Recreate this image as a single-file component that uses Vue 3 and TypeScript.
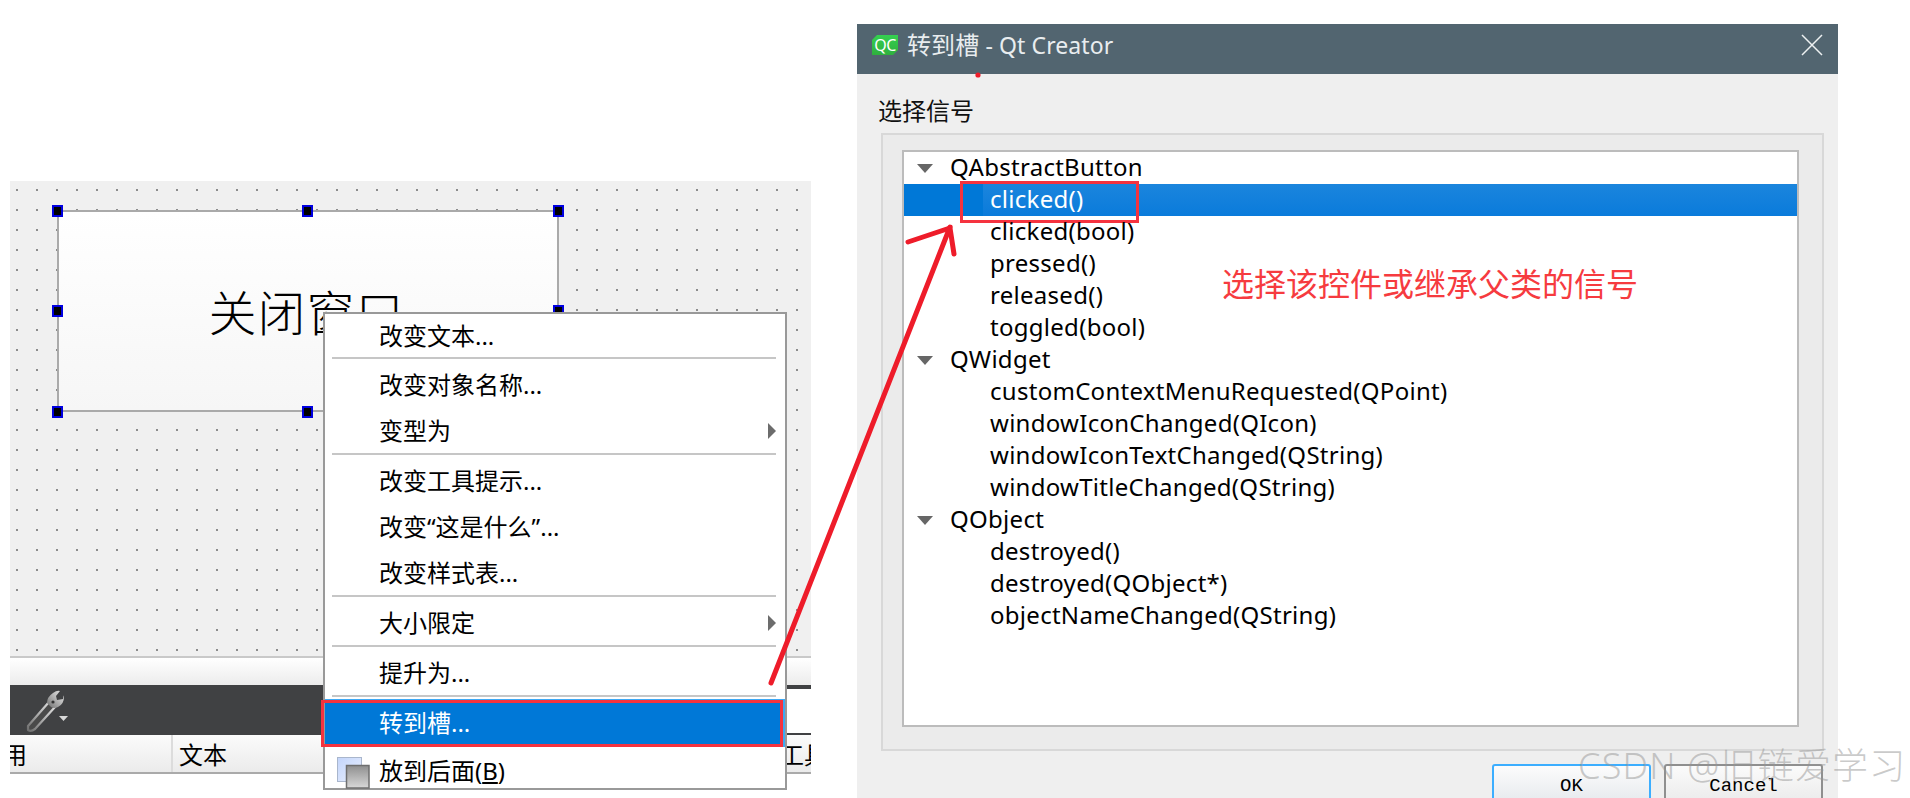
<script setup lang="ts">
interface MenuEntry {
  kind: 'item' | 'sep'
  text?: string
  sub?: boolean
}
interface Signal {
  name: string
  selected?: boolean
}
interface SignalGroup {
  name: string
  signals: Signal[]
}

const topMenu: MenuEntry[] = [
  { kind: 'sep' },
  { kind: 'item', text: '改变对象名称...' },
  { kind: 'item', text: '变型为', sub: true },
  { kind: 'sep' },
  { kind: 'item', text: '改变工具提示...' },
  { kind: 'item', text: '改变“这是什么”...' },
  { kind: 'item', text: '改变样式表...' },
  { kind: 'sep' },
  { kind: 'item', text: '大小限定', sub: true },
  { kind: 'sep' },
  { kind: 'item', text: '提升为...' },
  { kind: 'sep' },
]

const groups: SignalGroup[] = [
  {
    name: 'QAbstractButton',
    signals: [
      { name: 'clicked()', selected: true },
      { name: 'clicked(bool)' },
      { name: 'pressed()' },
      { name: 'released()' },
      { name: 'toggled(bool)' },
    ],
  },
  {
    name: 'QWidget',
    signals: [
      { name: 'customContextMenuRequested(QPoint)' },
      { name: 'windowIconChanged(QIcon)' },
      { name: 'windowIconTextChanged(QString)' },
      { name: 'windowTitleChanged(QString)' },
    ],
  },
  {
    name: 'QObject',
    signals: [
      { name: 'destroyed()' },
      { name: 'destroyed(QObject*)' },
      { name: 'objectNameChanged(QString)' },
    ],
  },
]

const handles = [
  { x: -7, y: -7 },
  { x: 243, y: -7 },
  { x: 494, y: -7 },
  { x: -7, y: 93 },
  { x: 494, y: 93 },
  { x: -7, y: 194 },
  { x: 243, y: 194 },
]
</script>

<template>
  <div class="page">
    <section class="designer-side">
      <div class="form">
        <div class="widget">
          <span class="widget-text">关闭窗口</span>
          <i
            v-for="(h, i) in handles"
            :key="i"
            class="handle"
            :style="{ left: h.x + 'px', top: h.y + 'px' }"
          ></i>
        </div>
      </div>
      <div class="strip"></div>
      <div class="toolbar">
        <div class="tool-main">
          <svg class="wrench" width="44" height="44" viewBox="0 0 44 44">
            <defs>
              <linearGradient id="wr" x1="0" y1="1" x2="1" y2="0">
                <stop offset="0" stop-color="#6e6e6e" />
                <stop offset="0.6" stop-color="#bdbdbd" />
                <stop offset="1" stop-color="#e4e4e4" />
              </linearGradient>
            </defs>
            <path
              d="M3 37 L24 13 L30 18 L10 40 Q6 43 3 41 Z"
              fill="#4a4a4a"
              stroke="url(#wr)"
              stroke-width="2.2"
              stroke-linejoin="round"
            />
            <path
              d="M22 14 Q22 8 28 4 Q32 1 35 2 L31 7 L32 11 L38 10 Q39 4 39 8 Q39 15 33 18 Q29 20 26 18 Z"
              fill="url(#wr)"
            />
            <circle cx="28" cy="13" r="1.6" fill="#333" />
            <path d="M34 27 H43 L38.5 32 Z" fill="#d8d8d8" />
          </svg>
        </div>
        <div class="tool-rest"></div>
      </div>
      <div class="columns">
        <div class="col col-first"><span class="clip-text">用</span></div>
        <div class="col col-text">文本</div>
        <div class="col col-tail">工具</div>
      </div>

      <div class="menu">
        <div class="item first">改变文本...</div>
        <template v-for="(m, i) in topMenu" :key="i">
          <div v-if="m.kind === 'sep'" class="sep"></div>
          <div v-else class="item">
            <span>{{ m.text }}</span>
            <i v-if="m.sub" class="sub"></i>
          </div>
        </template>
        <div class="item active">
          <span>转到槽...</span>
          <i class="active-box"></i>
        </div>
        <div class="item last">
          <svg class="back-icon" width="33" height="32" viewBox="0 0 33 32">
            <defs>
              <linearGradient id="bk" x1="0" y1="0" x2="1" y2="1">
                <stop offset="0" stop-color="#c3d5fb" />
                <stop offset="1" stop-color="#eaf0fe" />
              </linearGradient>
              <linearGradient id="fr" x1="0" y1="0" x2="0" y2="1">
                <stop offset="0" stop-color="#8f8f8f" />
                <stop offset="1" stop-color="#d8d8d8" />
              </linearGradient>
            </defs>
            <rect x="0.5" y="0.5" width="24" height="24" fill="url(#bk)" stroke="#a9b6cc" />
            <rect x="9.5" y="8.5" width="22.5" height="22.5" fill="url(#fr)" stroke="#6f6f6f" stroke-width="1.5" />
          </svg>
          <span>放到后面(<u>B</u>)</span>
        </div>
      </div>
    </section>

    <section class="dialog">
      <header class="titlebar">
        <div class="qc">QC</div>
        <div class="title"><span class="title-cn">转到槽</span> - Qt Creator</div>
        <svg class="close" width="22" height="22" viewBox="0 0 22 22">
          <path d="M1 1 L21 21 M21 1 L1 21" stroke="#eef1f2" stroke-width="1.5" fill="none" />
        </svg>
      </header>
      <div class="label">选择信号</div>
      <div class="group">
        <div class="tree">
          <template v-for="g in groups" :key="g.name">
            <div class="row parent"><i class="twisty"></i>{{ g.name }}</div>
            <div
              v-for="s in g.signals"
              :key="s.name"
              class="row child"
              :class="{ selected: s.selected }"
            >
              <span class="sig">{{ s.name }}</span>
              <i v-if="s.selected" class="sel-box"></i>
            </div>
          </template>
          <div class="note">选择该控件或继承父类的信号</div>
        </div>
      </div>
      <div class="buttons">
        <div class="btn ok">OK</div>
        <div class="btn">Cancel</div>
      </div>
    </section>

    <svg class="ink" width="1910" height="798" viewBox="0 0 1910 798">
      <g stroke="#ee1c2a" stroke-width="5" stroke-linecap="round" fill="none">
        <path d="M771 683 L950 227" />
        <path d="M908 242 L950 228 L954 254" />
      </g>
      <circle cx="978" cy="75" r="2.6" fill="#ee1c2a" />
    </svg>
    <div class="watermark">CSDN @旧链爱学习</div>
  </div>
</template>

<style>
html,
body {
  margin: 0;
  background: #fff;
}
</style>

<style scoped>
.page {
  position: relative;
  display: flex;
  align-items: flex-start;
  width: 1910px;
  height: 798px;
  overflow: hidden;
  background: #fff;
  font-family: "Noto Sans", "Noto Sans CJK SC", sans-serif;
  color: #000;
}

/* left: form editor */
.designer-side {
  position: relative;
  width: 801px;
  margin: 181px 0 0 10px;
  flex: none;
}
.form {
  height: 477px;
  padding: 29px 0 0 47px;
  box-sizing: border-box;
  background-color: #f0f0f0;
  background-image: radial-gradient(circle at 1px 1px, #8c8c8c 0.9px, transparent 1px);
  background-size: 20px 20px;
  background-position: 6px 8px;
  border-bottom: 2px solid #c9c9c9;
  overflow: hidden;
}
.widget {
  position: relative;
  width: 502px;
  height: 202px;
  box-sizing: border-box;
  border: 2px solid #aaa;
  background: linear-gradient(#fff, #f6f6f6);
  display: flex;
  align-items: center;
  justify-content: center;
  font-family: "Noto Sans CJK SC", sans-serif;
  font-size: 48px;
  font-weight: 300;
}
.widget-text {
  letter-spacing: 1px;
  margin: 0 3px 2px 0;
}
.handle {
  position: absolute;
  width: 11px;
  height: 12px;
  box-sizing: border-box;
  background: #000;
  border: 2px solid #0000e0;
}
.strip {
  height: 27px;
  background: linear-gradient(#fff, #ececec);
}
.toolbar {
  display: flex;
  height: 50px;
}
.tool-main {
  flex: 1;
  background: #404143;
  position: relative;
}
.wrench {
  position: absolute;
  left: 15px;
  top: 4px;
}
.tool-rest {
  width: 24px;
  box-sizing: border-box;
  background: #fff;
  border-top: 4px solid #404143;
  border-bottom: 2px solid #404143;
}
.columns {
  display: flex;
  height: 39px;
  box-sizing: border-box;
  border-bottom: 2px solid #aaa;
  background: linear-gradient(#fbfbfb, #ebebeb);
  font-family: "Noto Sans CJK SC", sans-serif;
  font-size: 24px;
  line-height: 37px;
  overflow: hidden;
}
.col {
  box-sizing: border-box;
  white-space: nowrap;
  overflow: hidden;
}
.col-first {
  width: 163px;
  border-right: 2px solid #dcdcdc;
}
.clip-text {
  display: block;
  margin-left: -7px;
}
.col-text {
  width: 607px;
  padding-left: 6px;
}
.col-tail {
  width: 31px;
}

/* context menu */
.menu {
  position: absolute;
  left: 313px;
  top: 131px;
  width: 464px;
  height: 478px;
  box-sizing: border-box;
  background: #fff;
  border: 2px solid #999;
  font-size: 24px;
}
.item {
  position: relative;
  display: flex;
  align-items: center;
  height: 46px;
  padding: 0 0 4px 54px;
  white-space: nowrap;
  box-sizing: border-box;
}
.item.first {
  height: 44px;
}
.sep {
  height: 2px;
  margin: -1px 9px 3px 7px;
  background: #c6c6c6;
}
.sub {
  position: absolute;
  right: 9px;
  top: 15px;
  border-left: 8px solid #6c6c6c;
  border-top: 8px solid transparent;
  border-bottom: 8px solid transparent;
}
.item.active {
  height: 47px;
  background: #0078d7;
  color: #fff;
  border-right: 2px solid #3da9f5;
  box-shadow: 0 -1px 0 #3da9f5;
}
.active-box {
  position: absolute;
  left: -4px;
  top: 0;
  right: 0;
  bottom: 0;
  border: 3px solid #f5333f;
}
.item.last {
  height: 41px;
  padding-top: 7px;
}
.back-icon {
  position: absolute;
  left: 12px;
  top: 10px;
}

/* right: dialog */
.dialog {
  width: 981px;
  margin: 24px 0 0 46px;
  height: 790px;
  flex: none;
  background: #efefef;
}
.titlebar {
  display: flex;
  align-items: center;
  height: 50px;
  box-sizing: border-box;
  padding: 0 0 8px 15px;
  background: #526570;
  color: #e9edef;
  font-size: 23px;
}
.qc {
  width: 26px;
  height: 20px;
  background: linear-gradient(#35d050, #2fb03e);
  clip-path: polygon(5px 0, 100% 0, 100% 15px, 21px 100%, 0 100%, 0 5px);
  color: #fff;
  font-size: 16px;
  line-height: 20px;
  text-align: center;
  letter-spacing: -0.5px;
}
.title {
  margin-left: 9px;
  padding-bottom: 3px;
  flex: 1;
  white-space: pre;
  letter-spacing: 0.1px;
}
.title-cn {
  font-size: 24px;
}
.close {
  margin-right: 15px;
}
.label {
  margin: 24px 0 9px 21px;
  height: 26px;
  line-height: 26px;
  font-size: 24px;
  color: #111;
}
.group {
  margin: 0 14px 0 24px;
  padding: 15px 23px 22px 19px;
  height: 618px;
  box-sizing: border-box;
  background: #ebebeb;
  border: 2px solid #d8d8d8;
}
.tree {
  position: relative;
  height: 577px;
  box-sizing: border-box;
  background: #fff;
  border: 2px solid #bcbcbc;
}
.row {
  position: relative;
  display: flex;
  align-items: center;
  height: 32px;
  box-sizing: border-box;
  padding-bottom: 4px;
  font-size: 24px;
  letter-spacing: 0.28px;
  white-space: nowrap;
}
.parent {
  padding-left: 46px;
}
.twisty {
  position: absolute;
  left: 13px;
  top: 12px;
  border-top: 9px solid #666;
  border-left: 8px solid transparent;
  border-right: 8px solid transparent;
}
.child {
  padding-left: 86px;
}
.selected {
  color: #fff;
  background: #0078d7;
  padding-left: 79px;
  padding-bottom: 0;
}
.selected .sig {
  flex: 1;
  align-self: stretch;
  display: flex;
  align-items: center;
  padding: 0 0 4px 7px;
  background: linear-gradient(#1b85dd, #0a7bdb);
}
.sel-box {
  position: absolute;
  left: 56px;
  top: -3px;
  width: 179px;
  height: 42px;
  box-sizing: border-box;
  border: 3px solid #f5333f;
}
.note {
  position: absolute;
  left: 318px;
  top: 110px;
  font-family: "Noto Sans CJK SC", sans-serif;
  font-size: 32px;
  line-height: 40px;
  color: #f63b3f;
  white-space: nowrap;
}
.buttons {
  display: flex;
  justify-content: flex-end;
  gap: 13px;
  margin-top: 13px;
  padding-right: 15px;
}
.btn {
  width: 159px;
  height: 44px;
  box-sizing: border-box;
  padding-top: 7px;
  text-align: center;
  border: 2px solid #8f8f8f;
  border-radius: 3px;
  background: linear-gradient(#fbfbfb, #e9e9e9);
  font-family: "Liberation Mono", monospace;
  font-size: 19px;
  line-height: 26px;
}
.btn.ok {
  border-color: #3caeff;
  background: linear-gradient(#fcfcfc, #e4e8ec);
}

/* overlays */
.ink {
  position: absolute;
  left: 0;
  top: 0;
  pointer-events: none;
}
.watermark {
  position: absolute;
  left: 1578px;
  top: 742px;
  font-size: 36px;
  line-height: 48px;
  font-weight: 300;
  letter-spacing: 1.2px;
  white-space: nowrap;
  color: rgba(150, 150, 150, 0.5);
}
</style>
